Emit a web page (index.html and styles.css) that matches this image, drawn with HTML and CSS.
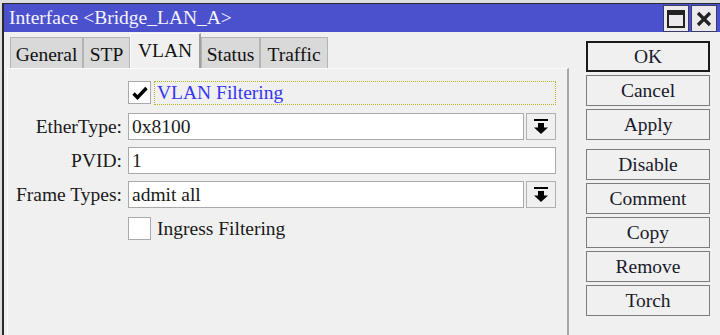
FILE: index.html
```html
<!DOCTYPE html>
<html>
<head>
<meta charset="utf-8">
<link rel="stylesheet" href="styles.css">
</head>
<body>
<div class="window">
  <div class="titlebar">
    <span class="title">Interface &lt;Bridge_LAN_A&gt;</span>
    <div class="wbtns">
      <div class="wbtn"><svg width="18" height="18" viewBox="0 0 18 18"><rect x="1" y="1" width="16" height="16" fill="none" stroke="#222" stroke-width="2"/><rect x="1" y="1" width="16" height="4" fill="#222"/></svg></div>
      <div class="wbtn"><svg width="16" height="16" viewBox="0 0 16 16"><path d="M2 2 L14 14 M14 2 L2 14" stroke="#222" stroke-width="3.2"/></svg></div>
    </div>
  </div>
  <div class="main">
    <div class="left">
      <div class="tabs">
        <div class="tab t-general">General</div>
        <div class="tab t-stp">STP</div>
        <div class="tab active">VLAN</div>
        <div class="tab t-status">Status</div>
        <div class="tab t-traffic">Traffic</div>
      </div>
      <div class="panel">
        <div class="row">
          <div class="lbl"></div>
          <div class="field">
            <div class="cbox"><svg width="16" height="14" viewBox="0 0 16 14"><path d="M1.5 7.5 L5.5 11.5 L14.5 2" fill="none" stroke="#000" stroke-width="3.4"/></svg></div>
            <div class="clabel focus">VLAN Filtering</div>
          </div>
        </div>
        <div class="row">
          <div class="lbl">EtherType:</div>
          <div class="field">
            <div class="input">0x8100</div>
            <div class="dd"><svg width="16" height="16" viewBox="0 0 16 16"><rect x="1" y="0" width="14" height="2" fill="#000"/><rect x="5" y="4" width="6" height="5" fill="#000"/><path d="M1 8.5 H15 L8 15 Z" fill="#000"/></svg></div>
          </div>
        </div>
        <div class="row">
          <div class="lbl">PVID:</div>
          <div class="field">
            <div class="input">1</div>
          </div>
        </div>
        <div class="row">
          <div class="lbl">Frame Types:</div>
          <div class="field">
            <div class="input">admit all</div>
            <div class="dd"><svg width="16" height="16" viewBox="0 0 16 16"><rect x="1" y="0" width="14" height="2" fill="#000"/><rect x="5" y="4" width="6" height="5" fill="#000"/><path d="M1 8.5 H15 L8 15 Z" fill="#000"/></svg></div>
          </div>
        </div>
        <div class="row">
          <div class="lbl"></div>
          <div class="field">
            <div class="cbox"></div>
            <div class="clabel">Ingress Filtering</div>
          </div>
        </div>
      </div>
    </div>
    <div class="side">
      <div class="group">
        <div class="btn default">OK</div>
        <div class="btn">Cancel</div>
        <div class="btn">Apply</div>
      </div>
      <div class="group">
        <div class="btn">Disable</div>
        <div class="btn">Comment</div>
        <div class="btn">Copy</div>
        <div class="btn">Remove</div>
        <div class="btn">Torch</div>
      </div>
    </div>
  </div>
</div>
</body>
</html>
```

FILE: styles.css
```css
* { box-sizing: border-box; }
html, body { margin: 0; height: 100%; overflow: hidden; }
body {
  background: #dedede;
  padding: 3px 0 0 2px;
  font-family: "Liberation Serif", "Times New Roman", serif;
  font-size: 19.5px;
  color: #1a1a1a;
}
.window {
  width: 718px;
  height: 340px;
  background: #f0f0f0;
  border-left: 2px solid #2a2a2a;
  border-top: 1px solid #2a2a2a;
  display: flex;
  flex-direction: column;
}
.titlebar {
  height: 28px;
  background: #4b50cc;
  display: flex;
  align-items: flex-start;
  justify-content: space-between;
  padding: 1px 3px 0 5px;
}
.title {
  color: #f4f4ff;
  line-height: 26px;
}
.wbtns { display: flex; gap: 2px; }
.wbtn {
  width: 26px;
  height: 27px;
  background: #ece9ec;
  border: 1px solid #3a3a6a;
  display: flex;
  align-items: center;
  justify-content: center;
}
.main {
  flex: 1;
  display: flex;
}
.left {
  width: 565px;
  display: flex;
  flex-direction: column;
}
.tabs {
  height: 36px;
  display: flex;
  align-items: flex-end;
  padding-left: 6px;
}
.tab {
  height: 31px;
  padding-top: 4px;
  line-height: 26px;
  text-align: center;
  background: #d9d9d9;
  border: 1px solid #b4b4b4;
  border-bottom: none;
  color: #111;
}
.t-general { width: 73px; }
.t-stp { width: 47px; }
.t-status { width: 59px; }
.t-traffic { width: 68px; }
.tab.active {
  width: 71px;
  height: 35px;
  padding-top: 4px;
  background: #f0f0f0;
  border-color: #fafafa #a0a0a0 transparent #fafafa;
  border-width: 1px 2px 0 1px;
}
.panel {
  flex: 1;
  margin-left: 3px;
  border-top: 1px solid #fbfbfb;
  border-left: 1px solid #fbfbfb;
  border-right: 2px solid #a6a6a6;
  padding-top: 10px;
  display: flex;
  flex-direction: column;
  gap: 7px;
}
.row {
  display: flex;
  height: 27px;
  align-items: center;
}
.lbl {
  width: 114px;
  text-align: right;
  margin-right: 6px;
}
.field {
  width: 428px;
  height: 27px;
  display: flex;
  align-items: center;
  gap: 2px;
}
.input {
  flex: 1;
  height: 27px;
  background: #fff;
  border: 1px solid #a9a9a9;
  padding-left: 3px;
  line-height: 25px;
}
.dd {
  width: 30px;
  height: 27px;
  border: 1px solid #b0b0b0;
  display: flex;
  align-items: center;
  justify-content: center;
}
.cbox {
  width: 23px;
  height: 23px;
  background: #fff;
  border: 1px solid #a9a9a9;
  display: flex;
  align-items: center;
  justify-content: center;
  margin-right: 1px;
}
.clabel {
  flex: 1;
  height: 24px;
  line-height: 22px;
  padding-left: 2px;
  border: 1px solid transparent;
}
.clabel.focus {
  color: #3636f0;
  border: 1px dotted #b5b52a;
}
.side {
  padding: 9px 0 0 17px;
  display: flex;
  flex-direction: column;
  gap: 9px;
}
.group { display: flex; flex-direction: column; gap: 3px; }
.btn {
  width: 124px;
  height: 31px;
  border: 1px solid #7c7c7c;
  text-align: center;
  line-height: 30px;
  color: #1a1a2a;
}
.btn.default { border: 2px solid #1a1a1a; line-height: 28px; }
```
